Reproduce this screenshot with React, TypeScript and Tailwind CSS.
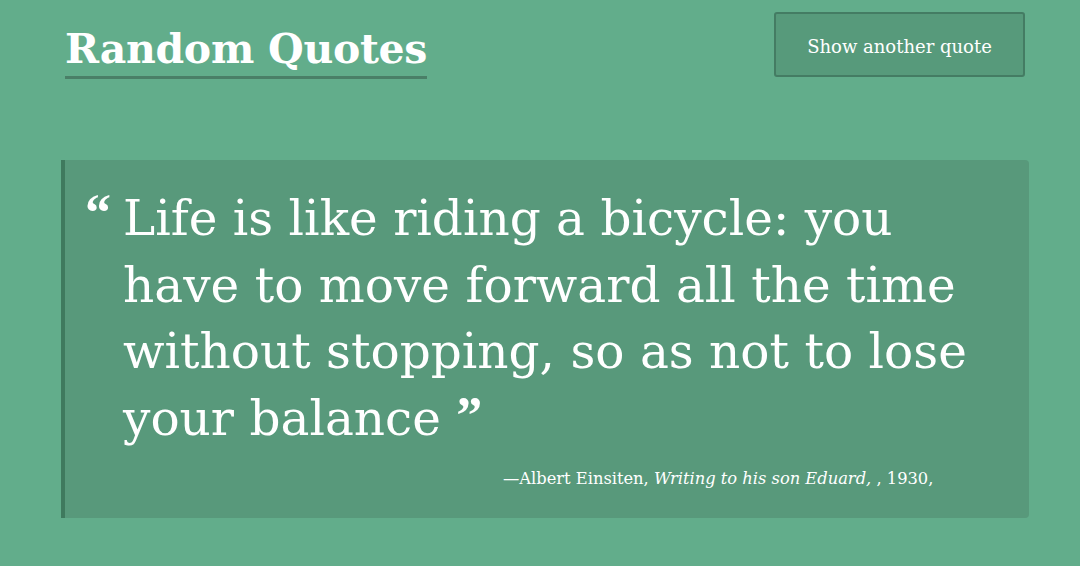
import React from "react";

export default function App() {
  return (
    <div className="min-h-screen w-full bg-[#62ad8b] text-white" style={{ fontFamily: '"DejaVu Serif", "Liberation Serif", serif' }}>
      <div className="flex items-start justify-between pl-[65px] pr-[55px] pt-[12px]">
        <h1 className="mt-[12px] inline-block border-b-[3px] border-[#4a7f67] pb-[2px] text-[41px] font-bold leading-[50px] tracking-[-0.3px]">
          Random Quotes
        </h1>
        <button className="h-[65px] w-[251px] rounded-[3px] border-2 border-[#447c63] bg-[#579a7b] pt-[3px] text-[18px] text-white">
          Show another quote
        </button>
      </div>
      <div className="ml-[61px] mr-[51px] mt-[81px] h-[358px] rounded-r-[4px] border-l-[4px] border-[#3f7a5e] bg-[#58997b] pl-[20px] pt-[25px]">
        <div className="flex">
          <span className="mt-[8px] w-[38px] shrink-0 font-['Liberation_Serif',serif] text-[52px] font-bold leading-[40px]">“</span>
          <p className="text-[48.5px] leading-[66.5px]">
            Life is like riding a bicycle: you
            <br />
            have to move forward all the time
            <br />
            without stopping, so as not to lose
            <br />
            your balance <span className="relative top-[-2px] font-['Liberation_Serif',serif] text-[52px] font-bold leading-[0]">”</span>
          </p>
        </div>
        <div className="mt-[16px] pl-[418px] text-[16.3px]">
          —Albert Einsiten, <i>Writing to his son Eduard,</i> , 1930,
        </div>
      </div>
    </div>
  );
}
